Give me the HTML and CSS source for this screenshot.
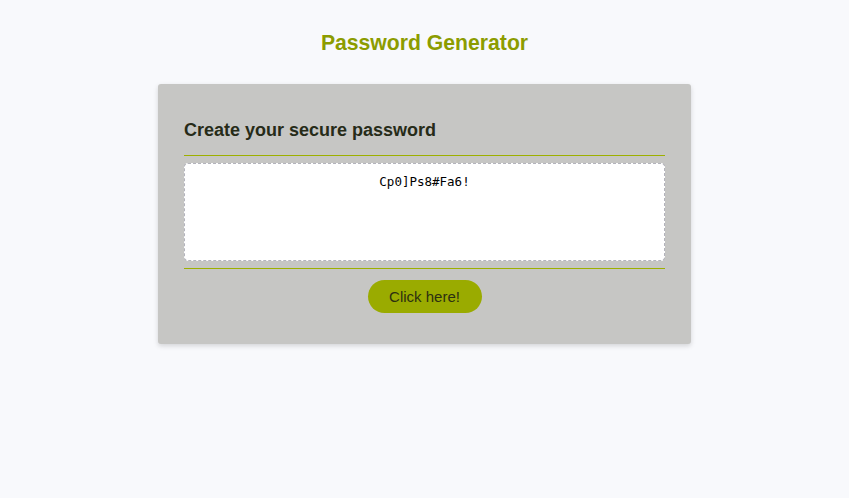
FILE: index.html
```html
<!DOCTYPE html>
<html>
<head>
<meta charset="utf-8">
<link rel="stylesheet" href="styles.css">
</head>
<body>
<h1 class="title">Password Generator</h1>
<div class="card">
  <h2 class="card-title">Create your secure password</h2>
  <div class="rule"></div>
  <textarea class="output" readonly>Cp0]Ps8#Fa6!</textarea>
  <div class="rule"></div>
  <div class="actions"><button class="btn">Click here!</button></div>
</div>
</body>
</html>
```
FILE: styles.css
```css
html, body { margin: 0; padding: 0; }
body {
  background: #f8f9fc;
  font-family: "Liberation Sans", Arial, sans-serif;
  height: 498px;
  padding-top: 31px;
  box-sizing: border-box;
}
.title {
  margin: 0 0 29px;
  text-align: center;
  font-size: 21.2px;
  line-height: 24px;
  font-weight: bold;
  color: #8c9c00;
}
.card {
  width: 533px;
  box-sizing: border-box;
  margin: 0 auto;
  background: #c6c6c4;
  border-radius: 3px;
  box-shadow: 0 2px 5px rgba(0,0,0,0.15);
  padding: 36px 26px 31px;
}
.card-title {
  margin: 0 0 14px;
  font-size: 18px;
  line-height: 21px;
  font-weight: bold;
  color: #262b18;
}
.rule { height: 1px; background: #9db000; }
.output {
  display: block;
  width: 100%;
  height: 98px;
  box-sizing: border-box;
  margin: 7px 0 7px;
  border: 1px dashed #b4b4bc;
  border-radius: 4px;
  background: #fff;
  resize: none;
  text-align: center;
  font-family: "DejaVu Sans Mono", monospace;
  font-size: 12.5px;
  line-height: 15px;
  padding: 10px;
  color: #000;
  outline: none;
}
.actions { display: flex; justify-content: center; margin-top: 11px; }
.btn {
  width: 114px;
  height: 33px;
  border: none;
  border-radius: 17px;
  background: #9aab00;
  color: #2c3010;
  font-family: "Liberation Sans", Arial, sans-serif;
  font-size: 15px;
  padding: 0;
}
```
